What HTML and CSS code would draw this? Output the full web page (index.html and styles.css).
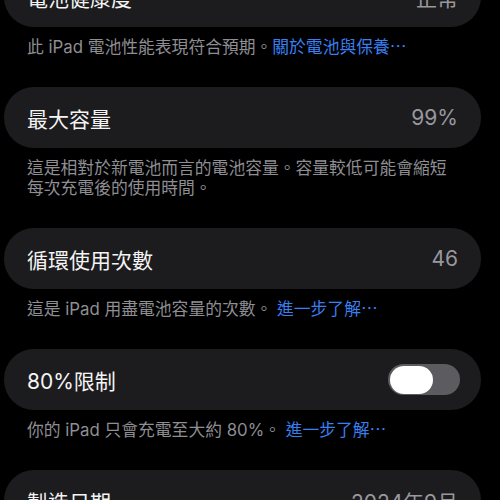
FILE: index.html
```html
<!DOCTYPE html>
<html lang="zh-Hant">
<head>
<meta charset="utf-8">
<link rel="stylesheet" href="styles.css">
</head>
<body>
<div class="list">
  <div class="card">
    <span class="label">電池健康度</span>
    <span class="value">正常</span>
  </div>
  <div class="footer">此 iPad 電池性能表現符合預期。<span class="link">關於電池與保養⋯</span></div>

  <div class="card">
    <span class="label">最大容量</span>
    <span class="value">99%</span>
  </div>
  <div class="footer">這是相對於新電池而言的電池容量。容量較低可能會縮短<br>每次充電後的使用時間。</div>

  <div class="card">
    <span class="label">循環使用次數</span>
    <span class="value">46</span>
  </div>
  <div class="footer">這是 iPad 用盡電池容量的次數。 <span class="link">進一步了解⋯</span></div>

  <div class="card">
    <span class="label">80%限制</span>
    <span class="toggle"><span class="knob"></span></span>
  </div>
  <div class="footer">你的 iPad 只會充電至大約 80%。 <span class="link">進一步了解⋯</span></div>

  <div class="card">
    <span class="label">製造日期</span>
    <span class="value">2024年9月</span>
  </div>
</div>
</body>
</html>
```
FILE: styles.css
```css
html, body {
  margin: 0;
  padding: 0;
  background: #000;
  height: 100%;
  overflow: hidden;
}
body {
  font-family: Inter, "Noto Sans CJK TC", sans-serif;
  color: #fff;
}
.list {
  margin-top: -34px;
  padding: 0 19px 0 4px;
  display: flex;
  flex-direction: column;
}
.card {
  height: 61px;
  flex: none;
  box-sizing: border-box;
  background: #1c1c1e;
  border-radius: 30px;
  display: flex;
  align-items: center;
  justify-content: space-between;
  padding: 0 23px;
}
.label {
  font-size: 21px;
  color: #f4f4f4;
}
.value {
  font-size: 21px;
  color: #98989e;
}
.footer {
  padding: 10px 23px 30px;
  font-size: 16.8px;
  line-height: 20px;
  color: #8e8e93;
  white-space: nowrap;
}
.link {
  color: #3a7ff0;
}
.toggle {
  width: 72px;
  height: 31px;
  border-radius: 16px;
  background: #5b5b60;
  display: flex;
  align-items: center;
  padding: 0 2px;
  box-sizing: border-box;
  margin-right: -2px;
}
.knob {
  width: 43px;
  height: 28px;
  border-radius: 14px;
  background: #fff;
}
```
